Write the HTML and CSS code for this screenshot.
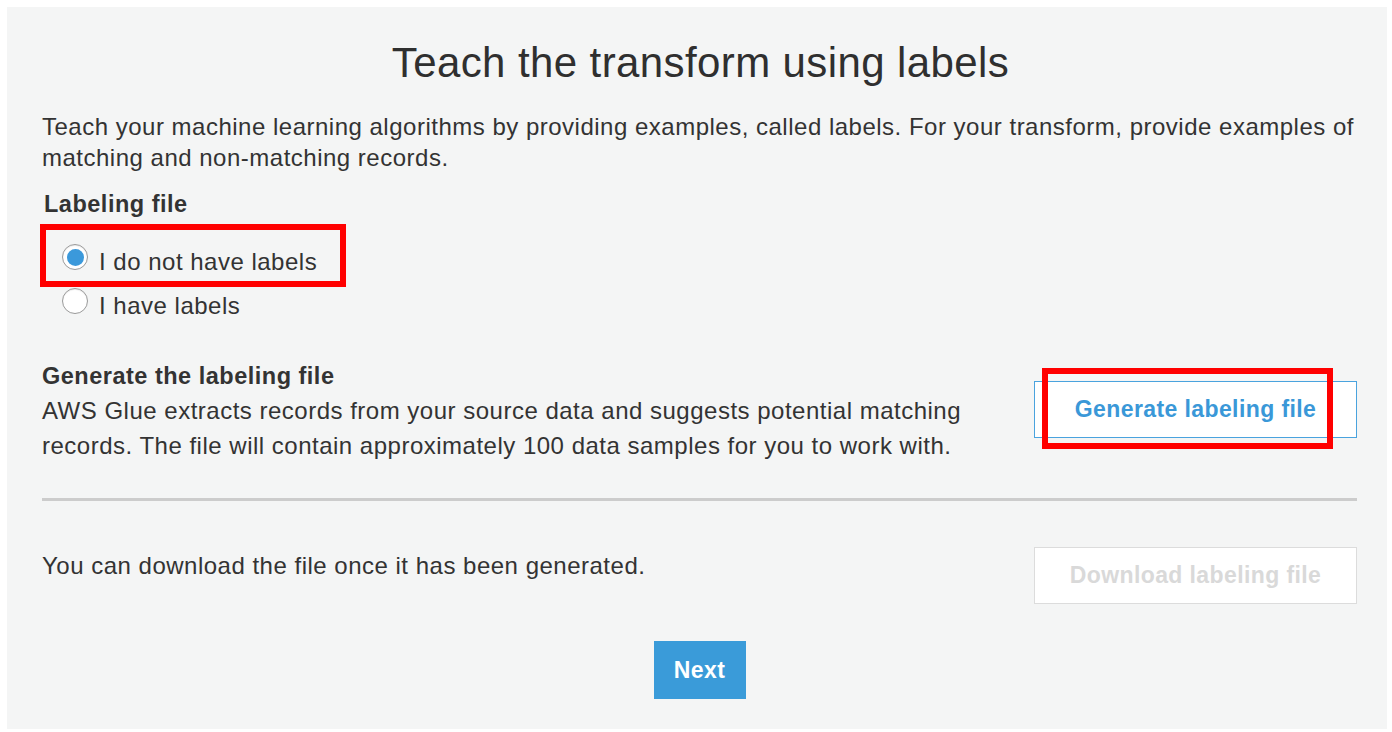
FILE: index.html
```html
<!DOCTYPE html>
<html lang="en">
<head>
<meta charset="utf-8">
<title>Teach the transform using labels</title>
<link rel="stylesheet" href="styles.css">
</head>
<body>
<div class="panel">
  <h1 class="title">Teach the transform using labels</h1>
  <p class="intro">Teach your machine learning algorithms by providing examples, called labels. For your transform, provide examples of matching and non-matching records.</p>

  <div class="field-label">Labeling file</div>
  <div class="radios">
    <label class="radio-row">
      <span class="radio checked"></span>
      <span class="radio-text">I do not have labels</span>
    </label>
    <label class="radio-row">
      <span class="radio"></span>
      <span class="radio-text">I have labels</span>
    </label>
    <span class="highlight hl-radio"></span>
  </div>

  <div class="row gen-row">
    <div class="row-text">
      <div class="section-title">Generate the labeling file</div>
      <p class="section-desc">AWS Glue extracts records from your source data and suggests potential matching records. The file will contain approximately 100 data samples for you to work with.</p>
    </div>
    <div class="btn-wrap gen-wrap">
      <button class="btn btn-outline">Generate labeling file</button>
      <span class="highlight hl-btn"></span>
    </div>
  </div>

  <hr class="divider">

  <div class="row dl-row">
    <p class="section-desc dl-text">You can download the file once it has been generated.</p>
    <div class="btn-wrap">
      <button class="btn btn-disabled">Download labeling file</button>
    </div>
  </div>

  <div class="footer">
    <button class="btn btn-primary">Next</button>
  </div>
</div>
</body>
</html>
```

FILE: styles.css
```css
* { box-sizing: border-box; }

html, body {
  margin: 0;
  padding: 0;
  background: #ffffff;
}

body {
  font-family: "Liberation Sans", Arial, Helvetica, sans-serif;
  color: #333333;
  padding: 7px 5px 3px 7px;
}

.panel {
  background: #f4f5f5;
  width: 1380px;
  height: 722px;
  padding: 33px 30px 0 35px;
}

.title {
  margin: 0;
  text-align: center;
  font-size: 42px;
  line-height: 46px;
  font-weight: 400;
  letter-spacing: 0.4px;
  color: #2f2f2f;
  padding-left: 2px;
}

.intro {
  margin: 25px 0 0 0;
  font-size: 24px;
  line-height: 31px;
  letter-spacing: 0.5px;
  color: #333333;
}

.field-label {
  margin: 16px 0 0 2px;
  font-size: 23.5px;
  line-height: 30px;
  font-weight: 700;
  letter-spacing: 0.5px;
  color: #333333;
}

.radios {
  position: relative;
  margin-top: 20px;
  display: flex;
  flex-direction: column;
}

.radio-row {
  display: flex;
  align-items: center;
  height: 44px;
  padding-left: 20px;
}

.radio {
  flex: none;
  width: 26px;
  height: 26px;
  border-radius: 50%;
  border: 1.5px solid #9a9a9a;
  background: #ffffff;
  display: inline-flex;
  align-items: center;
  justify-content: center;
  margin-top: -8px;
  box-shadow: inset 0 1px 1px rgba(0,0,0,0.08);
}

.radio.checked::after {
  content: "";
  width: 17px;
  height: 17px;
  border-radius: 50%;
  background: #3b99db;
}

.radio-text {
  margin-left: 11px;
  margin-top: 2px;
  font-size: 24px;
  line-height: 30px;
  letter-spacing: 0.5px;
  color: #333333;
}

.highlight {
  position: absolute;
  border: 6px solid #ff0000;
  pointer-events: none;
}

.hl-radio {
  left: -2px;
  top: -15px;
  width: 306px;
  height: 63px;
}

.row {
  display: flex;
  justify-content: space-between;
  align-items: flex-start;
}

.gen-row {
  margin-top: 34px;
}

.row-text {
  width: 960px;
}

.section-title {
  font-size: 23.5px;
  line-height: 30px;
  font-weight: 700;
  letter-spacing: 0.5px;
  color: #333333;
}

.section-desc {
  margin: 2px 0 0 0;
  font-size: 24px;
  line-height: 35px;
  letter-spacing: 0.5px;
  color: #333333;
}

.btn-wrap {
  position: relative;
}

.gen-wrap {
  margin-top: 20px;
}

.hl-btn {
  left: 8px;
  top: -13px;
  width: 291px;
  height: 81px;
}

.btn {
  font-family: "Liberation Sans", Arial, Helvetica, sans-serif;
  font-size: 23px;
  font-weight: 700;
  letter-spacing: 0.4px;
  cursor: pointer;
}

.btn-outline,
.btn-disabled {
  width: 323px;
  height: 57px;
  background: #ffffff;
}

.btn-outline {
  border: 1px solid #4aa3de;
  color: #3a98d8;
}

.btn-disabled {
  border: 1px solid #dcdcdc;
  color: #d9d9d9;
  cursor: default;
}

.divider {
  margin: 35px 0 0 0;
  border: 0;
  height: 3px;
  background: #cccccc;
}

.dl-row {
  margin-top: 46px;
}

.dl-text {
  margin-top: 1px;
}

.footer {
  display: flex;
  justify-content: center;
  margin-top: 37px;
}

.btn-primary {
  width: 92px;
  height: 58px;
  border: 0;
  background: #3a9bd9;
  color: #ffffff;
}
```
